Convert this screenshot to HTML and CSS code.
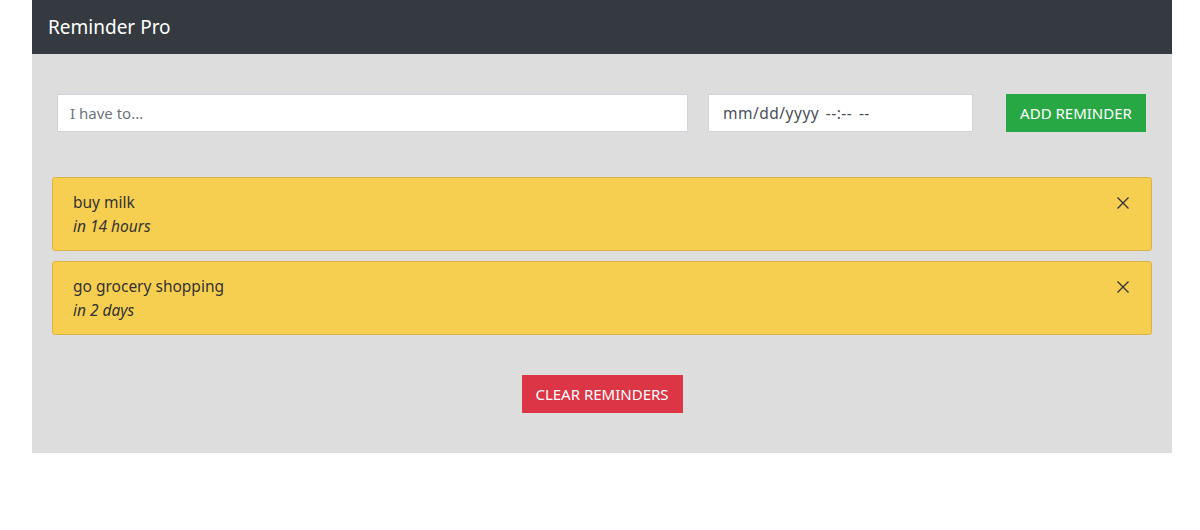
FILE: index.html
```html
<!DOCTYPE html>
<html>
<head>
<meta charset="utf-8">
<link rel="stylesheet" href="styles.css">
</head>
<body>
<div class="app">
  <header class="navbar">Reminder Pro</header>
  <main class="panel">
    <form class="add-form">
      <input class="field field-text" type="text" placeholder="I have to...">
      <div class="field field-date">mm/dd/yyyy --:-- --</div>
      <button type="button" class="btn btn-add">ADD REMINDER</button>
    </form>
    <ul class="list">
      <li class="item">
        <div class="item-text">
          <div class="item-title">buy milk</div>
          <div class="item-time">in 14 hours</div>
        </div>
        <span class="close"><svg width="14" height="14" viewBox="0 0 14 14"><path d="M1.5 1.5L12.5 12.5M12.5 1.5L1.5 12.5" stroke="#333" stroke-width="1.3" fill="none"/></svg></span>
      </li>
      <li class="item">
        <div class="item-text">
          <div class="item-title">go grocery shopping</div>
          <div class="item-time">in 2 days</div>
        </div>
        <span class="close"><svg width="14" height="14" viewBox="0 0 14 14"><path d="M1.5 1.5L12.5 12.5M12.5 1.5L1.5 12.5" stroke="#333" stroke-width="1.3" fill="none"/></svg></span>
      </li>
    </ul>
    <div class="clear-row">
      <button type="button" class="btn btn-clear">CLEAR REMINDERS</button>
    </div>
  </main>
</div>
</body>
</html>
```
FILE: styles.css
```css
* { box-sizing: border-box; }
body {
  margin: 0;
  font-family: "Noto Sans", "Open Sans", sans-serif;
  background: #fff;
  color: #212529;
}
.app {
  width: 1140px;
  margin-left: 32px;
}
.navbar {
  height: 54px;
  background: #343a40;
  color: #fff;
  font-size: 19px;
  line-height: 54px;
  padding-left: 16px;
}
.panel {
  background: #dddddd;
  padding: 40px 0 40px;
}
.add-form {
  display: flex;
  align-items: center;
  padding: 0 26px 0 25px;
  margin: 0;
}
.field {
  height: 38px;
  background: #fff;
  border: 1px solid #ced4da;
  font-family: "Noto Sans", "Open Sans", sans-serif;
  font-size: 15px;
  padding: 0 12px;
  color: #495057;
  outline: none;
}
.field-text {
  flex: 1;
}
.field-text::placeholder {
  color: #6c757d;
  font-family: "Noto Sans", "Open Sans", sans-serif;
}
.field-date {
  width: 265px;
  margin-left: 20px;
  line-height: 36px;
  padding-left: 14px;
  font-size: 15.5px;
  color: #495057;
  letter-spacing: 0.5px;
  word-spacing: 2px;
}
.btn {
  height: 38px;
  border: none;
  color: #fff;
  font-family: "Noto Sans", "Open Sans", sans-serif;
  font-size: 15px;
  padding: 0;
  cursor: pointer;
}
.btn-add {
  width: 140px;
  margin-left: 33px;
  background: #28a745;
}
.list {
  list-style: none;
  margin: 45px 0 0;
  padding: 0 20px;
  display: flex;
  flex-direction: column;
  gap: 10px;
}
.item {
  height: 74px;
  background: #f7cf50;
  border: 1px solid #dcb347;
  border-radius: 3px;
  display: flex;
  justify-content: space-between;
  align-items: flex-start;
  padding: 12px 20px 0 20px;
  color: #333;
  font-size: 15.5px;
  line-height: 24px;
}
.item-time { font-style: italic; }
.close {
  display: flex;
  margin-top: 6px;
  margin-right: 1px;
}
.clear-row {
  display: flex;
  justify-content: center;
  margin-top: 40px;
}
.btn-clear {
  width: 161px;
  background: #dc3545;
}
```
